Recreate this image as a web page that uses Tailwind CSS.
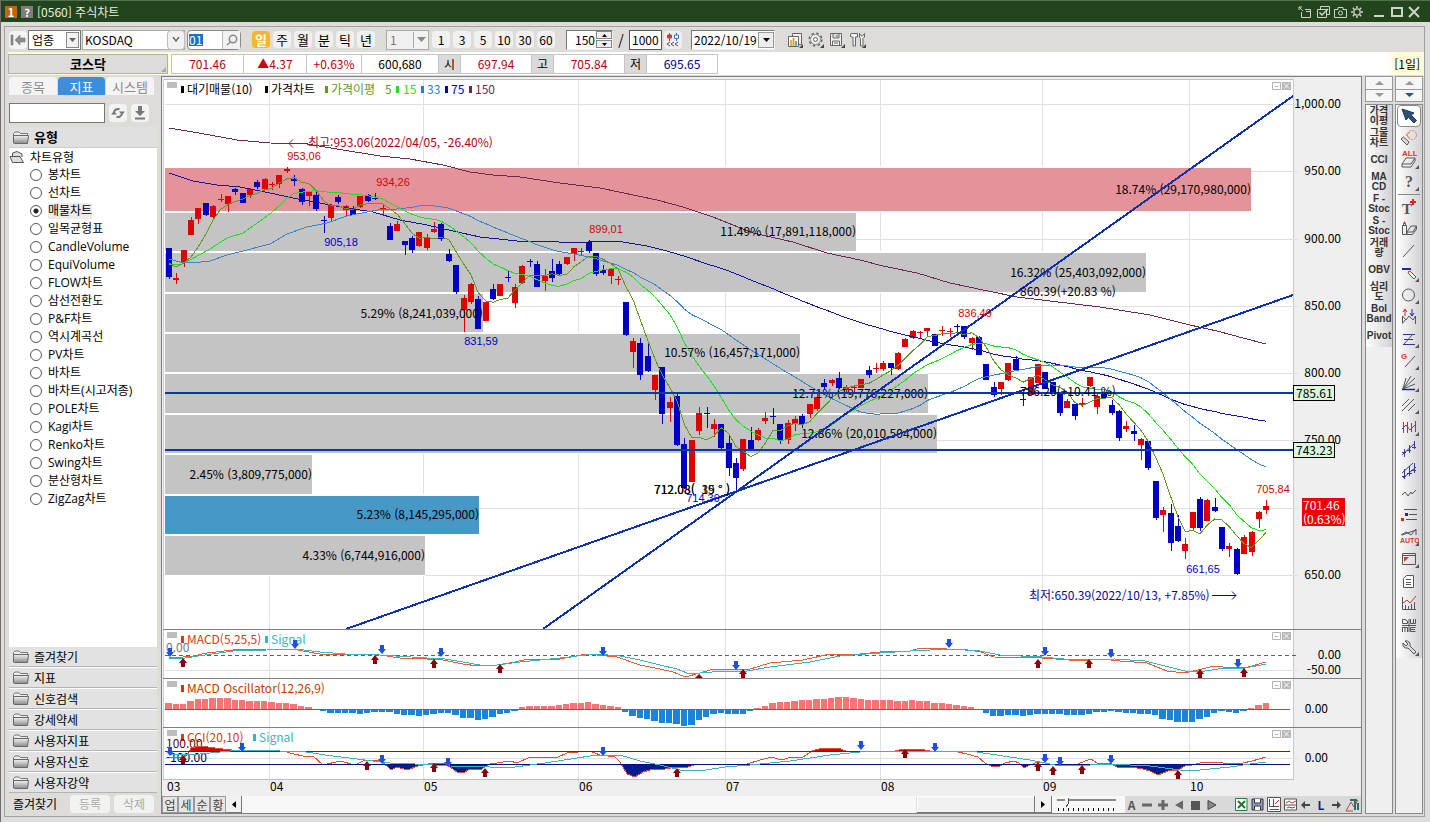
<!DOCTYPE html>
<html lang="ko">
<head>
<meta charset="utf-8">
<title>[0560] 주식차트</title>
<script src="https://cdn.jsdelivr.net/npm/@tailwindcss/browser@4"></script>
</head>
<body class="flex min-h-screen flex-col border-b border-l border-[#6c6c6c] bg-[#dddcd8] font-['Noto_Sans_CJK_KR',sans-serif] text-xs leading-4 text-black">

<header class="-ml-px flex h-[22px] items-center gap-1 border-t border-[#52704c] bg-[#23451d] pl-[5px] pr-[10px] text-[#e8eee6]">
  <span class="flex h-3 w-3 items-center justify-center bg-[#c2660c] text-[11px] font-bold leading-3 text-white">1</span>
  <span class="flex h-3 w-3 items-center justify-center bg-[#7d7d7d] text-[11px] font-bold leading-3 text-white">?</span>
  <h1 class="flex-1">[0560] 주식차트</h1>
  <div class="flex items-center gap-1">
    <button aria-label="분리"><svg width="14" height="12" fill="none" stroke="#cdd5ca"><path d="M1 4V1H4M1 1L5 5M3.500 6V11.500H12.500V3.500H7M8 5.500H12"/></svg></button>
    <button aria-label="복사"><svg width="14" height="12" fill="none" stroke="#cdd5ca"><path d="M4.500 3V.5H13.500V8.500H11M1.500 3.500H10.500V11.500H1.500Z"/><path d="M3.500 6.500L6 9L12 3" stroke-width="1.500"/></svg></button>
    <button aria-label="캡처"><svg width="13" height="12" fill="none" stroke="#cdd5ca"><path d="M.5 3.500H4V1.500H9V3.500H12.500V11.500H.5Z"/><circle cx="6.500" cy="7" r="2"/></svg></button>
    <button aria-label="설정"><svg width="13" height="12" fill="none" stroke="#cdd5ca"><circle cx="6" cy="6" r="3.200" stroke-width="1.300"/><path d="M6 0V2M6 10V12M0 6H2M10 6H12M1.800 1.800L3.200 3.200M8.800 8.800L10.200 10.200M10.200 1.800L8.800 3.200M3.200 8.800L1.800 10.200" stroke-width="1.500"/></svg></button>
    <button aria-label="최소화" class="ml-[6px]"><svg width="11" height="12"><path d="M0 10H10" stroke="#cdd5ca" stroke-width="2"/></svg></button>
    <button aria-label="최대화" class="ml-[2px]"><svg width="12" height="12"><path d="M1 2H11V10H1Z" fill="none" stroke="#cdd5ca" stroke-width="2"/></svg></button>
    <button aria-label="닫기" class="ml-px"><svg width="12" height="12"><path d="M1 1L11 11M11 1L1 11" stroke="#cdd5ca" stroke-width="2"/></svg></button>
  </div>
</header>

<div class="mr-[5px] ml-[3px] mt-1 mb-[5px] flex flex-1 flex-col border border-[#a5a0a0] pb-[2px]">

  <!-- toolbar -->
  <div class="flex h-[25px] items-center pl-1">
    <button aria-label="처음" class="flex h-[18px] w-[18px] items-center justify-center rounded-sm bg-[#f4f4f4]"><svg width="16" height="12" fill="#8c8c8c"><path d="M1 1H3V11H1ZM5 6L10 1V4H15V8H10V11Z" stroke="#777" stroke-width=".6"/></svg></button>
    <label class="relative ml-px flex"><select aria-label="구분" class="h-5 w-[53px] appearance-none border border-[#777] bg-white pl-[3px] outline-none"><option>업종</option></select><span class="pointer-events-none absolute right-[2px] top-[2px] flex h-4 w-[13px] items-center justify-center border border-[#888] bg-[#f2f2f2]"><svg width="7" height="4"><path d="M0 0H7L3.500 4Z" fill="#666"/></svg></span></label>
    <label class="relative ml-px flex"><select aria-label="종목" class="h-5 w-[103px] appearance-none border border-[#aaa] bg-white pl-[2px] outline-none"><option>KOSDAQ</option></select><span class="pointer-events-none absolute right-0 top-0 flex h-5 w-[18px] items-center justify-center rounded border border-[#bbb] bg-[#f1f1f1]"><svg width="8" height="5"><path d="M1 0L4 4L7 0" fill="none" stroke="#666" stroke-width="1.400"/></svg></span></label>
    <div class="ml-[2px] flex h-5 w-[54px] items-center rounded-sm border border-[#888] bg-white pl-px"><input aria-label="코드" value="01" class="h-3 w-[14px] bg-[#1173cf] text-white outline-none"><button aria-label="검색" class="ml-auto flex h-[18px] w-[18px] items-center justify-center border-l border-[#bbb] bg-[#f1f1f1]"><svg width="12" height="12" fill="none" stroke="#8a8a8a" stroke-width="1.500"><circle cx="7" cy="5" r="3.700"/><path d="M4.500 8L1 11"/></svg></button></div>
    <div class="ml-[11px] flex gap-[3px]" id="periods"></div>
    <label class="relative ml-[11px] flex"><select aria-label="간격" class="h-5 w-[43px] appearance-none border border-[#aaa] bg-[#f0f0f0] pl-[3px] text-[#777] outline-none"><option>1</option></select><span class="pointer-events-none absolute right-px top-[2px] flex h-4 w-[15px] items-center justify-center border-l border-[#aaa] bg-[#f2f2f2]"><svg width="9" height="5"><path d="M0 0H9L4.500 5Z" fill="#888"/></svg></span></label>
    <div class="ml-[3px] flex gap-[3px]" id="minutes"></div>
    <div class="ml-[11px] flex h-5 w-[47px] items-center border border-b-[#eee] border-l-[#777] border-r-[#eee] border-t-[#777] bg-white"><input aria-label="조회 봉수" value="150" class="w-[28px] bg-transparent text-right outline-none"><span class="ml-px flex flex-col"><button aria-label="증가" class="flex h-2 w-4 items-center justify-center border border-[#888] bg-[#eee]"><svg width="5" height="3"><path d="M0 3H5L2.500 0Z"/></svg></button><button aria-label="감소" class="mt-px flex h-2 w-4 items-center justify-center border border-[#888] bg-[#eee]"><svg width="5" height="3"><path d="M0 0H5L2.500 3Z"/></svg></button></span></div>
    <span class="w-4 text-center text-sm">/</span>
    <input aria-label="전체 봉수" value="1000" class="h-5 w-[33px] border border-[#555] bg-white pl-[2px] outline-none">
    <button aria-label="봉 이동" class="ml-[2px] flex h-[18px] w-[18px] items-center justify-center rounded-sm bg-[#efefef]"><svg width="14" height="15" fill="none"><path d="M3.500 1V9M1.500 3H5.500V6H1.500Z" fill="#dc3535" stroke="#dc3535"/><path d="M10.500 1V9" stroke="#3574c8"/><path d="M8.500 3H12.500V6.500H8.500Z" fill="#fff" stroke="#3574c8"/><path d="M4 10L1 12L4 14M8 10L5 12L8 14M12 10L9 12L12 14" stroke="#555"/></svg></button>
    <label class="relative ml-[9px] flex"><select aria-label="날짜" class="h-5 w-[84px] appearance-none border border-b-[#eee] border-l-[#777] border-r-[#eee] border-t-[#777] bg-white pl-[2px] outline-none"><option>2022/10/19</option></select><span class="pointer-events-none absolute right-px top-[2px] flex h-4 w-4 items-center justify-center border border-[#999] bg-[#eee]"><svg width="7" height="4"><path d="M0 0H7L3.500 4Z"/></svg></span></label>
    <div class="ml-3 flex gap-[5px]">
      <button aria-label="차트 종류"><svg width="16" height="16" fill="none" stroke="#666"><path fill="#eee" d="M5.500 1.500H14.500V12.500H5.500Z"/><path fill="#fff" d="M1.500 4.500H11.500V14.500H1.500Z"/><path d="M4 8V14" stroke="#eab04a" stroke-width="2"/><path d="M6.500 6V14" stroke="#e0a030" stroke-width="2"/><path d="M9 9V14" stroke="#57b6c4" stroke-width="2"/><path d="M16 12V16H12Z" fill="#444" stroke="none"/></svg></button>
      <button aria-label="환경 설정"><svg width="16" height="16" fill="none" stroke="#666"><circle cx="7.500" cy="7.500" r="6.300" stroke-width="1.500" stroke-dasharray="2.500 2.450"/><circle cx="7.500" cy="7.500" r="5" fill="#f2f2f2" stroke="#888"/><circle cx="7.500" cy="7.500" r="2"/><path d="M16 12V16H12Z" fill="#444" stroke="none"/></svg></button>
      <button aria-label="저장"><svg width="16" height="16" fill="none" stroke="#666"><path fill="#f2f2f2" d="M1.500 1.500H12.500V13.500H1.500ZM4 1.500V6H10V1.500M3.500 13V9H10.500V13M5 11H9M8 3V5"/><path d="M16 12V16H12Z" fill="#444" stroke="none"/></svg></button>
      <button aria-label="도구"><svg width="16" height="16" fill="none" stroke="#666"><path fill="#f2f2f2" d="M.5 4.500V2L2 1.500H7.500V5H5.500V14H3V5H2ZM9.500 1.500V5L10.500 6.500V14H13V6.500L14.500 5V1.500L12.500 4H11.500Z"/><path d="M16 12V16H12Z" fill="#444" stroke="none"/></svg></button>
    </div>
  </div>

  <!-- quote strip -->
  <div class="ml-[3px] flex h-[23px] items-center bg-linear-to-r from-[#fdfbd9] from-10% to-white to-20%">
    <button class="relative mr-[3px] h-5 w-[160px] border border-[#b0b0ac] bg-[#dddcd8] text-[13px] font-bold">코스닥<svg class="absolute bottom-px right-px" width="5" height="5"><path d="M5 0V5H0Z" fill="#aaa"/></svg></button>
    <dl class="flex h-5 border border-[#c4c4c4] bg-white text-center leading-[18px]">
      <dd class="w-[71px] text-[#b40010]">701.46</dd>
      <dd class="w-[63px] border-l border-[#c4c4c4] text-[#b40010]"><span class="text-[#d00010]">▲</span>4.37</dd>
      <dd class="w-[55px] border-l border-[#c4c4c4] text-[#b40010]">+0.63%</dd>
      <dd class="w-[77px] border-l border-[#c4c4c4]">600,680</dd>
      <dt class="w-[22px] border-l border-[#c4c4c4] bg-[#dadada]">시</dt>
      <dd class="w-[71px] border-l border-[#c4c4c4] text-[#b40010]">697.94</dd>
      <dt class="w-[22px] border-l border-[#c4c4c4] bg-[#dadada]">고</dt>
      <dd class="w-[71px] border-l border-[#c4c4c4] text-[#b40010]">705.84</dd>
      <dt class="w-[22px] border-l border-[#c4c4c4] bg-[#dadada]">저</dt>
      <dd class="w-[71px] border-l border-[#c4c4c4] text-[#00008c]">695.65</dd>
    </dl>
    <span class="ml-auto flex h-full items-center bg-linear-to-r from-white to-[#fffcd4] to-30% pl-2 pr-1">[1일]</span>
  </div>

  <main class="mt-px flex flex-1 items-stretch pl-1 pr-px">

    <!-- indicator sidebar -->
    <aside class="flex w-[148px] shrink-0 flex-col">
      <nav class="mt-px flex h-[18px] items-stretch gap-px text-[13px] leading-[17px] text-[#8c8c8c]">
        <button class="w-12 rounded-t bg-[#f4f4f4]">종목</button>
        <button class="w-[47px] rounded-t bg-[#3b8edb] text-white">지표</button>
        <button class="w-12 rounded-t bg-[#f4f4f4]">시스템</button>
      </nav>
      <div class="mt-2 flex h-5 items-center">
        <input aria-label="지표 검색" class="h-5 w-24 border border-[#777] bg-white outline-none">
        <button aria-label="새로고침" class="ml-1 flex h-[18px] w-[18px] items-center justify-center rounded bg-[#f3f3f3]"><svg width="14" height="14" fill="none" stroke="#777" stroke-width="2"><path d="M3 7A4 4 0 0 1 8.500 3.300M11 7A4 4 0 0 1 5.500 10.700"/><path d="M8 5.500H14L11 9ZM6 8.500H0L3 5Z" fill="#777" stroke="none"/></svg></button>
        <button aria-label="내려받기" class="ml-1 flex h-[18px] w-[18px] items-center justify-center rounded bg-[#f3f3f3]"><svg width="12" height="14" fill="#777"><path d="M4 0H8V5H11L6 10L1 5H4ZM1 11.500H11V13.500H1Z"/></svg></button>
      </div>
      <section class="mt-1 flex flex-1 flex-col bg-white">
        <h2 class="flex h-[21px] items-center gap-[5px] border-b border-[#ccc] bg-[#e0e0e0] pl-1 text-[13px] font-bold"><svg width="16" height="13"><use href="#folder"/></svg>유형</h2>
        <p class="flex h-[18px] items-center gap-[5px]"><svg width="16" height="14" fill="#ddd" stroke="#555"><path d="M3.500 7V3L8 1.500L13 4V7M1 6.500H11L14.500 12.500H3.500Z"/></svg>차트유형</p>
        <div id="types" class="flex flex-col"></div>
      </section>
      <div id="groups" class="flex flex-col"></div>
      <div class="flex h-[21px] items-center gap-1 pl-1"><span class="w-[53px]">즐겨찾기</span><button disabled class="h-[18px] w-10 rounded bg-[#f2f2f0] text-[#aaa]">등록</button><button disabled class="h-[18px] w-10 rounded bg-[#f2f2f0] text-[#aaa]">삭제</button></div>
    </aside>

    <!-- chart window -->
    <section class="ml-1 flex min-w-0 flex-1 flex-col border border-[#7e7e86] bg-[#efefef]">
      <svg id="chart" viewBox="162 77 1199 719" class="block h-auto w-full" role="img" aria-label="KOSDAQ 일봉 차트"></svg>
      <div class="flex h-[17px] items-stretch bg-[#f8f8f8]">
        <div id="marks" class="flex"></div>
        <button aria-label="왼쪽" class="flex w-4 items-center justify-center border-b border-r border-[#777] bg-[#f1f1f1]"><svg width="4" height="7"><path d="M4 0V7L0 3.500Z"/></svg></button>
        <div class="flex flex-1 justify-end"><div class="w-[118px] border-b border-r border-[#777] bg-[#f1f1f1] shadow-[inset_1px_1px_#fff,-1px_0_#ddd]"></div></div>
        <button aria-label="오른쪽" class="flex w-[17px] items-center justify-center border-b border-r border-[#777] bg-[#f1f1f1]"><svg width="4" height="7"><path d="M0 0V7L4 3.500Z"/></svg></button>
        <svg width="70" height="16" class="ml-[3px] shrink-0" fill="none" stroke="#555" shape-rendering="crispEdges"><path d="M2 4H10M13 4H61" stroke="#888" stroke-width="2"/><path d="M13 2V8L11 11"/><path d="M3 13H63" stroke="#111" stroke-width="3" stroke-dasharray="1 4"/></svg>
        <div class="flex items-center gap-[3px] bg-[#d9d9d9] pr-px">
          <button aria-label="자동" class="w-[13px] font-bold text-[#555]">A</button>
          <button aria-label="축소"><svg width="13" height="12"><path d="M1 4.500H11V7.500H1Z" fill="#666"/></svg></button>
          <button aria-label="확대"><svg width="13" height="12"><path d="M4.500 1H7.500V4.500H11V7.500H7.500V11H4.500V7.500H1V4.500H4.500Z" fill="#666"/></svg></button>
          <button aria-label="이전"><svg width="13" height="12"><path d="M10 1.500V10.500L2 6Z" fill="#666"/></svg></button>
          <button aria-label="정지"><svg width="13" height="12"><path d="M2 2H11V11H2Z" fill="#555"/></svg></button>
          <button aria-label="다음"><svg width="13" height="12"><path d="M3 1.500V10.500L11 6Z" fill="#888" stroke="#444"/></svg></button>
          <button aria-label="엑셀" class="ml-[14px]"><svg width="13" height="13"><path d="M.5 .5H12V12.500H.5Z" fill="#fff" stroke="#23803a"/><path d="M3 3L10 10M10 3L3 10" stroke="#1d7a35" stroke-width="2"/></svg></button>
          <button aria-label="저장하기"><svg width="13" height="13" fill="#8fa0b5" stroke="#334"><path d="M1 1H12V12H1Z"/><path d="M3.500 1V5H9.500V1M3.500 12V8H9.500V12" fill="#fff"/></svg></button>
          <button aria-label="십자선"><svg width="14" height="15" fill="#fff" stroke="#555"><path d="M.5 .5H13.500V14.500H.5Z"/><path d="M2.500 2V9.500H12M6.500 2V9M3 12.500H12" fill="none"/><path d="M8 7L12 3" stroke="#b33"/></svg></button>
          <button aria-label="지표 보기"><svg width="13" height="13" fill="#fff" stroke="#555"><path d="M.5 1H12.500V12H.5Z"/><path d="M2 5L5 3L8 5L12 3" fill="none" stroke="#b33"/><path d="M.5 7H12.500M3 10L5 9L8 10L11 9" fill="none"/></svg></button>
          <button aria-label="뒤로"><svg width="12" height="12"><path d="M1 6L5 2V5H10V7H5V10Z" fill="#444"/></svg></button>
          <button aria-label="로그" class="w-3 font-bold text-[#1c1c8c]">L</button>
          <button aria-label="앞으로"><svg width="12" height="12"><path d="M11 6L7 2V5H2V7H7V10Z" fill="#444"/></svg></button>
          <button aria-label="차트 도구"><svg width="15" height="14" fill="none" stroke="#555"><path d="M1 13L6 4L9 9L13 2M1 13H8" stroke="#b44"/><path d="M5 2H12M10 2V12M13 5V12" stroke="#2a6b6b" stroke-width="2"/></svg></button>
        </div>
      </div>
    </section>

    <!-- indicator shortcuts -->
    <div class="ml-[3px] flex w-7 flex-col">
      <div class="flex h-[26px] flex-col border border-[#999] bg-[#f6f6f6]"><button aria-label="위로" class="flex flex-1 items-center justify-center border-b border-[#999]"><svg width="9" height="4"><path d="M0 4H9L4.500 0Z" fill="#999"/></svg></button><button aria-label="아래로" class="flex flex-1 items-center justify-center"><svg width="9" height="4"><path d="M0 0H9L4.500 4Z" fill="#999"/></svg></button></div>
      <div class="mt-[2px] flex-1 border border-[#888] bg-[#efefef]"><div id="shortcuts" class="flex flex-col bg-linear-to-r from-white to-[#d2d2d6]"></div></div>
    </div>

    <!-- drawing tools -->
    <div class="ml-[2px] flex w-7 flex-col">
      <div class="flex h-[26px] flex-col border border-[#999] bg-[#f6f6f6]"><button aria-label="도구 위로" class="flex flex-1 items-center justify-center border-b border-[#999]"><svg width="9" height="4"><path d="M0 4H9L4.500 0Z" fill="#999"/></svg></button><button aria-label="도구 아래로" class="flex flex-1 items-center justify-center"><svg width="9" height="4"><path d="M0 0H9L4.500 4Z" fill="#2f5078"/></svg></button></div>
      <div class="mt-[2px] flex-1 border border-[#888] bg-[#efefef]"><div id="tools" class="flex flex-col items-center bg-linear-to-r from-white to-[#d2d2d6]"></div></div>
    </div>
  </main>
</div>

<svg width="0" height="0" class="absolute" aria-hidden="true"><defs>
  <linearGradient id="fg" x2="0" y2="1"><stop stop-color="#f2f2f2"/><stop offset="1" stop-color="#8a8a8a"/></linearGradient>
  <g id="folder"><path d="M.5 11.500V2.500L2 1H6L7.500 2.500H14.500V5H3Z" fill="#eee" stroke="#777"/><path d="M.5 12V4.500H15.500L14.500 12.500H1.500Z" fill="url(#fg)" stroke="#666"/></g>
</defs></svg>

<script>
const $ = id => document.getElementById(id);

$('periods').innerHTML = ['일','주','월','분','틱','년'].map((t, i) => i === 0
  ? `<button class="flex h-[17px] w-[18px] items-center justify-center rounded-sm bg-[#f7b52c] text-[13px] font-bold text-white">${t}</button>`
  : `<button class="flex h-[17px] w-[18px] items-center justify-center rounded-sm bg-[#f1f1f1] text-[13px]">${t}</button>`).join('');
$('minutes').innerHTML = ['1','3','5','10','30','60'].map(t => `<button class="flex h-[17px] w-[18px] items-center justify-center rounded-sm bg-[#f1f1f1]">${t}</button>`).join('');

$('types').innerHTML = ['봉차트','선차트','매물차트','일목균형표','CandleVolume','EquiVolume','FLOW차트','삼선전환도','P&amp;F차트','역시계곡선','PV차트','바차트','바차트(시고저종)','POLE차트','Kagi차트','Renko차트','Swing차트','분산형차트','ZigZag차트']
  .map((t, i) => `<label class="flex h-[18px] items-center gap-[6px] pl-[21px] font-['Open_Sans','Noto_Sans_CJK_KR',sans-serif]"><input type="radio" name="type" class="h-3 w-3 appearance-none rounded-full border border-[#555] bg-white checked:bg-[radial-gradient(#222_0_2px,#fff_3px)]"${i === 2 ? ' checked' : ''}><span class="px-[2px]${i === 2 ? ' bg-[#ececec]' : ''}">${t}</span></label>`).join('');

$('groups').innerHTML = ['즐겨찾기','지표','신호검색','강세약세','사용자지표','사용자신호','사용자강약']
  .map(t => `<button class="flex h-[21px] items-center gap-[5px] border-b border-t border-b-[#b4b4b4] border-t-white bg-[#e2e2e2] pl-1 text-left"><svg width="16" height="13"><use href="#folder"/></svg>${t}</button>`).join('');

$('marks').innerHTML = ['업','세','순','황'].map(t => `<button class="w-4 border border-[#999] bg-[#e6e6e6] leading-[14px] text-[#444]">${t}</button>`).join('');

$('shortcuts').innerHTML = ['가격<br>이평','그물<br>차트','CCI','MA<br>CD','F -<br>Stoc','S -<br>Stoc','거래<br>량','OBV','심리<br>도','Bol<br>Band','Pivot']
  .map(t => `<button class="h-[22px] font-['Liberation_Sans','Noto_Sans_CJK_KR',sans-serif] text-[10px] font-bold leading-[10px] text-[#333]">${t}</button>`).join('');

const corner = '<path d="M20 15V19H16Z" fill="#555" stroke="none"/>';
const tools = [
  ['선택','<path d="M3 3L7 14L9.500 11.500L15 17L17.500 14.500L12 9L15 7Z" fill="#2c5277" stroke="#1c3a58"/>'],
  ['되돌리기','<circle cx="13" cy="7" r="4.500" stroke="#e08050" stroke-dasharray="2 1"/><path d="M11 4L7 7L11 10" stroke="#e08050"/><path d="M2 11L4.500 9L10 14L8 17Z" fill="#ddd"/>'],
  ['전체 지우기','<text x="3" y="6" font-size="8" font-weight="bold" fill="#d43a20" stroke="none" font-family="Liberation Sans">ALL</text><path d="M3 14L7 8H16L12 14ZM3 14V17H12L16 11V8" fill="#f2f2f2"/>' + corner],
  ['도움말','<text x="6" y="15" font-size="16" font-weight="bold" fill="#555" stroke="none" font-family="Liberation Serif">?</text>' + corner],
  ['문자','<text x="3" y="17" font-size="15" font-weight="bold" fill="#555" stroke="none" font-family="Liberation Serif">T</text><path d="M14 2V8M11 5H17" stroke="#e02020" stroke-width="2"/>'],
  ['채우기','<path d="M3.500 6.500H7.500V15.500H3.500ZM4.500 6V4.500H6.500V6M8 13L12 7H17.500L14 13ZM8 13V15.500H13.500L17.500 10V7"/><path d="M5 3L6 4" stroke="#d43a20" stroke-width="2"/>'],
  ['추세선','<path d="M4 16L15 4"/>'],
  ['펜','<path d="M3 6H12" stroke="#2222c0" stroke-width="2"/><path d="M9 9L11 8L17 14L15 16L10 11Z" fill="#efe" stroke="#b34"/>' + corner],
  ['원','<circle cx="9.500" cy="10" r="6"/>' + corner],
  ['구간','<path d="M3.500 16V9L7 13L10 9L14 13L16.500 9V17M3.500 16.500L7 12"/><path d="M6 9V2M4 5L6 2L8 5" stroke="#e02020"/><path d="M13 2V9M11 6L13 9L15 6" stroke="#2222c0"/>'],
  ['평행선','<path d="M4 5.500H16M4 15.500H16M5 10.500H14" stroke="#333396"/><path d="M14 5L5 15"/>' + corner],
  ['황금분할','<text x="2" y="8" font-size="8" font-weight="bold" fill="#d43a20" stroke="none" font-family="Liberation Sans">G</text><path d="M6 16L16 5"/>' + corner],
  ['팬','<path d="M4 16L7 5M4 16L12 3M4 16L16 5M4 16L16 11"/><path d="M3 16.500H16" stroke="#2222c0" stroke-width="1.500"/>' + corner],
  ['삼선','<path d="M3 11L10 4M3 16L15 4M9 16L16 9"/>' + corner],
  ['주기선','<path d="M4.500 5V16M8.500 5V16M12.500 6V15M16.500 4V15" stroke="#994030"/><path d="M3 12L7 8L11 13L17 7" stroke="#994030"/>' + corner],
  ['회귀선','<path d="M3 16L16 4M5.500 10V18M10.500 6V14M15.500 2V10M3 13.500H7M8 11.500H12M13 8.500H17" stroke="#3a3a94"/>'],
  ['회귀채널','<path d="M3 12L14 2M4 17L17 6M5.500 8V18M10.500 5V15M15.500 2V12M3 15.500H7M8 12.500H13M12 9.500H17" stroke="#3a3a94"/>'],
  ['파동','<path d="M3 12L6 9L9 13L12 9L13 11L17 7"/>'],
  ['수평선','<path d="M5 4.500H18M10 9.500H18M7 14.500H18"/><path d="M2 13H5V16H2Z" fill="#e02020" stroke="none"/><path d="M6 8H9V11H6Z" fill="#2222c0" stroke="none"/>'],
  ['자동추세','<path d="M2 8L7 5L12 8L17 2V8M3 8L17 3"/><text x="1" y="16" font-size="7" font-weight="bold" fill="#d43a20" stroke="none" font-family="Liberation Sans">AUTO</text>' + corner],
  ['창','<path d="M3.500 4.500H16.500V15.500H3.500ZM3 6.500H17"/><path d="M5 8H10L5 13Z" fill="#d43a20" stroke="none"/>' + corner],
  ['문서','<path d="M7.500 4.500H14.500V16.500H4.500V7.500ZM7 8.500H12M7 11.500H12M7 13.500H12" fill="#fff"/>'],
  ['통계','<path d="M3.500 4V16.500H17M6.500 12V17M9.500 13V17M12.500 11V17M15.500 9V17"/><path d="M4 10L8 7L11 10L17 3" stroke="#c33"/>'],
  ['배치','<path d="M3.500 4.500H6L8.500 6V8.500H3.500ZM11.500 4V8.500H16.500V4M14.500 4V8M3.500 12V17M3.500 12.500H8.500V17M6 13V17M16.500 12.500H11.500V16.500H16.500M11.500 14.500H16M3 10.500H17M10 4V17"/>'],
  ['설정 도구','<path d="M4 6L7 9L9 7L6 4A4 4 0 0 1 11 9L17 15L15 17L9 11A4 4 0 0 1 4 6Z" fill="#ddd"/>' + corner],
];
$('tools').innerHTML = tools.map(([name, p], i) =>
  `<button aria-label="${name}" class="${i === 0 ? 'flex h-[22px] w-6 items-center justify-center rounded-sm border border-[#8a8a8a] bg-white' : 'flex h-[22px] w-6 items-center justify-center'}"><svg width="20" height="20" class="shrink-0" fill="none" stroke="#555">${p}</svg></button>` +
  (i === 3 ? '<hr class="my-px w-[22px] border-[#888]">' : '')).join('');

/* ---------- chart ---------- */
const X0 = 169, STEP = 7.364, cx = i => X0 + STEP * i;
const out = [];
const add = s => out.push(s);
const line = (x1, y1, x2, y2, c, w = 1, extra = '') => add(`<line x1="${x1}" y1="${y1}" x2="${x2}" y2="${y2}" stroke="${c}" stroke-width="${w}" shape-rendering="crispEdges" ${extra}/>`);
const rect = (x, y, w, h, c, extra = '') => add(`<rect x="${x}" y="${y}" width="${w}" height="${h}" fill="${c}" shape-rendering="crispEdges" ${extra}/>`);
const text = (x, y, t, c = '#000', a = 'start', cls = '') => add(`<text x="${x}" y="${y}" fill="${c}" text-anchor="${a}" class="whitespace-pre ${cls}">${t}</text>`);
const poly = (pts, c) => add(`<polyline points="${pts.map(p => p.join()).join(' ')}" fill="none" stroke="${c}" shape-rendering="crispEdges"/>`);

rect(162, 77, 1199, 719, '#efefef');
rect(163, 79, 1131, 701, '#fff');
line(163, 79.5, 1294, 79.5, '#c0c0c0');
line(1293.5, 79, 1293.5, 780, '#c8c8c8');
line(163.5, 79, 163.5, 780, '#d0d0d0');
[104,171,239,306,373,440,508,575].forEach(y => line(165, y + .5, 1298, y + .5, '#e0e0e0'));
[269,423,578,725,880,1042,1189].forEach(x => line(x + .5, 80, x + .5, 783, '#e0e0e0'));
[670,758].forEach(y => line(165, y + .5, 1298, y + .5, '#e0e0e0'));

/* volume by price: top, height, right edge, label */
const profile = [
  [168,43,1251,'18.74% (29,170,980,000)','#e5939a'],
  [213,38,856,'11.49% (17,891,118,000)'],
  [253,39,1146,'16.32% (25,403,092,000)'],
  [294,39,483,'5.29% (8,241,039,000)'],
  [334,38,800,'10.57% (16,457,171,000)'],
  [374,39,928,'12.71% (19,776,227,000)'],
  [415,38,937,'12.86% (20,010,504,000)'],
  [455,39,312,'2.45% (3,809,775,000)'],
  [496,38,479,'5.23% (8,145,295,000)','#4698c7'],
  [536,39,425,'4.33% (6,744,916,000)'],
];
profile.forEach(([y, h, r, , c]) => { rect(165, y - 2, r - 165, h + 3, '#fff'); rect(165, y, r - 165, h, c || '#c4c4c4'); });

/* candles: colour, body top, body bottom, wick top, wick bottom; thirds of a pixel below the base */
const sets = [
  [90, `B474 560 474 567,R563 569 550 583,R480 516 480 530,R390 434 380 434,R354 386 354 402,B339 374 339 378,R348 380 345 387,R326 329 313 338,R318 342 318 366,B297 307 293 314,B309 338 309 340,R297 314 294 324,B276 290 269 297,R267 298 264 298,R283 286 275 299,R256 284 254 293,R236 241 230 248,B267 272 254 287,B297 335 294 345,R306 319 304 348,B316 358 307 363,B390 393 378 428,R345 383 342 392,B320 335 316 342,R348 360 345 381,B360 374 349 374,R318 352 318 355,B315 332 312 335,B325 329 309 330,R354 357 343 380,B408 449 399 449,R402 422 393 422,B453 465 453 494,B444 480 438 490,R426 468 426 471,R440 474 431 480,R418 428 396 430,B402 448 398 453,B492 513 478 516,B525 606 525 612,R624 659 614 725,R582 635 578 640,B626 716 618 716,R635 692 635 692,B597 627 583 630,R583 620 583 620`],
  [200, `B230 233 213 245,R261 308 252 323,R198 250 194 252,B183 186 178 203,B192 260 184 260,R228 242 207 272,B213 234 177 245,B192 223 183 226,R171 191 171 195,R144 163 144 182,R153 157 143 165,B126 152 120 160,B160 223 160 228,B209 219 196 225,R207 228 203 252,R238 241 228 256,B306 404 306 408,R423 456 414 503,B429 524 414 540,B468 512 430 518,R525 570 525 600,B502 643 502 672,R606 624 592 666,B588 734 582 738,B732 864 714 868,R720 845 720 845,R639 692 621 704,B640 643 621 684,R672 686 656 710,B672 743 672 750,B730 806 708 828,B789 833 774 870,R717 806 717 812,B720 748 682 750,R690 719 684 723,R654 662 635 670,B649 653 625 672,B672 719 672 731,R669 719 660 732,R657 672 648 692,B648 671 643 684,R612 641 612 653,R591 626 580 635,B549 562 538 567,R541 551 536 558,B534 564 517 568,R562 572 555 578,R562 566 555 575`],
  [260, `R358 384 358 384,B331 347 318 355,R325 329 309 338,R309 326 304 335,B309 323 309 345,R279 326 276 330,R237 260 234 260,R213 234 210 236,R216 219 213 235,R205 215 205 228,B223 260 223 260,R211 214 198 228,R214 217 204 232,B199 202 192 220,B198 230 198 238,R234 250 230 268,B231 284 228 284,B312 359 312 359,B381 406 366 412,R366 388 366 405,R310 361 310 365,B297 329 289 334,B418 421 400 440,R351 406 351 406,R313 370 313 370,B337 388 337 388,B367 400 367 400,B402 458 398 466,R424 446 418 446,B433 470 433 482,R430 436 414 440,R351 377 351 380,R408 440 400 462,B398 414 398 414,B436 460 420 466,B454 536 450 542,R498 508 483 516,B514 524 495 542,R538 557 534 600,B544 626 544 632,B664 776 664 782,R751 767 742 818,B760 851 732 872,B798 844 765 846,R852 872 835 899,R757 806 757 812,B717 803 711 812,R720 782 717 784,B741 752 714 755,B802 869 802 875,R858 868 850 893,B867 941 864 945,R832 884 826 884,R816 875 814 888,R756 776 752 803,R739 751 720 762`],
];
const closes = [];
let n = 0;
for (const [base, rows] of sets) for (const row of rows.split(',')) {
  const up = row[0] === 'R', [t, b, h, l] = row.slice(1).split(' ').map(v => base + v / 3);
  const x = Math.round(cx(n++)), c = up ? '#e00000' : '#0000c4';
  rect(x, Math.round(h), 1, Math.max(1, Math.round(l - h)), c);
  rect(x - 3, Math.round(t), 6, Math.max(1, Math.round(b - t)), c);
  closes.push(up ? t : b);
}
const average = (len, lead, c) => {
  const pts = [...lead];
  for (let i = len - 1; i < closes.length; i++) pts.push([cx(i), closes.slice(i - len + 1, i + 1).reduce((a, v) => a + v) / len]);
  poly(pts, c);
};
poly([[169,128],[193,132],[210,135],[237,140],[270,143],[307,144],[343,150],[380,156],[410,159],[443,165],[470,172],[493,175],[520,177],[560,183],[600,188],[657,200],[683,207],[713,217],[753,233],[793,242],[827,253],[860,260],[883,266],[917,273],[950,283],[983,290],[1017,297],[1050,301],[1100,307],[1150,315],[1190,325],[1217,331],[1243,338],[1266,344]], '#6e2a4e');
average(75, [[169,173],[193,181],[217,185],[240,187],[270,193],[293,198],[320,203],[347,208],[373,212],[400,220],[427,225],[453,231],[480,237],[517,241],[540,241],[577,243],[600,241],[623,242],[647,246],[667,251],[687,257],[707,264]], '#1414a0');
average(33, [[169,259],[180,262],[193,263],[210,261],[227,255],[243,251],[270,244],[287,234],[307,227],[327,223],[347,216],[367,212],[383,209],[397,209]], '#3a86c8');
average(15, [[169,264],[180,265],[190,260],[210,249],[227,238],[243,233],[260,221]], '#22dd22');
average(5, [[169,263],[176,267],[184,263],[191,257]], '#5f9a1e');

profile.forEach(([y, h, r, t]) => text(r, y + Math.round(h / 2) + 4, t, '#000', 'end'));
line(165, 393, 1293, 393, '#0a36b0', 2);
line(165, 450, 1293, 450, '#0a36b0', 2);
line(346, 629, 1293, 295, '#0a30b4', 2);
line(543, 629, 1293, 96, '#0a30b4', 2);

text(654, 494, '712.08(  35 ° )');
text(654, 494, '712.08(  19 ° )');
text(1020, 296, '860.39(+20.83 %)');
text(1020, 396, '786.20(+10.41 %)');
text(308, 147, '최고:953.06(2022/04/05, -26.40%)', '#b40018');
add('<path d="M308 143.500H289M293 139.500L289 143.500L293 147.500" fill="none" stroke="#c00018"/>');
text(1029, 600, '최저:650.39(2022/10/13, +7.85%)', '#0a0a90');
add('<path d="M1212 595.500H1236M1232 591.500L1236 595.500L1232 599.500" fill="none" stroke="#0a0a90"/>');
[[304,160,'953,06',1],[393,186,'934,26',1],[341,246,'905,18'],[606,233,'899,01',1],[481,345,'831,59'],[975,317,'836,49',1],[703,502,'714,39'],[1203,573,'661,65'],[1273,493,'705,84',1]]
  .forEach(([x, y, t, up]) => text(x, y, t, up ? '#d80000' : '#0000c4', 'middle', "font-['Liberation_Sans'] text-[11px]"));

/* legends */
const key = (x, y, c) => rect(x, y, 3, 7, c);
rect(167, 82, 10, 6, '#bdbdbd');
[[181,'대기매물(10)','#000'],[265,'가격차트','#000'],[325,'가격이평','#5f9a1e'],[396,'15','#22dd22',403],[421,'33','#2a7ccc',427],[445,'75','#0000b4',451],[469,'150','#6e2a4e',475]]
  .forEach(([x, t, c, tx]) => { key(x, 86, c); text(tx || x + 6, 94, t, c); });
text(385, 94, '5', '#5f9a1e');
const ctl = y => {
  add(`<path d="M1272.500 ${y + .5}H1280.500V${y + 7.5}H1272.500ZM1275 ${y + 4.5}H1278" fill="#fff" stroke="#b4b4b4"/>`);
  rect(1282, y, 9, 8, '#b8b8b8');
  add(`<path d="M1284 ${y + 1.5}L1289 ${y + 6.5}M1289 ${y + 1.5}L1284 ${y + 6.5}" stroke="#fff"/>`);
};
[82, 632, 681, 730].forEach(ctl);

/* price axis */
[[108,'1,000.00'],[175,'950.00'],[243,'900.00'],[310,'850.00'],[377,'800.00'],[444,'750.00'],[579,'650.00'],[659,'0.00'],[674,'-50.00']].forEach(([y, t]) => text(1341, y, t, '#000', 'end'));
text(1328, 713, '0.00', '#000', 'end');
text(1328, 762, '0.00', '#000', 'end');
[[385,'785.61'],[442,'743.23']].forEach(([y, t]) => { rect(1293.5, y + .5, 41, 15, '#dcf8dc', 'stroke="#000"'); text(1296, y + 13, t); });
rect(1302, 498, 43, 28, '#f00000');
text(1303, 510, '701.46', '#fff');
text(1303, 524, '(0.63%)', '#fff');
[629, 678, 727].forEach(y => line(163, y + .5, 1361, y + .5, '#808080'));
line(163, 779.5, 1294, 779.5, '#c0c0c0');
[[167,'03'],[270,'04'],[424,'05'],[579,'06'],[726,'07'],[881,'08'],[1043,'09'],[1190,'10']].forEach(([x, t]) => text(x, 791, t));

/* MACD */
const arrow = (x, y, up) => add(up
  ? `<path d="M${x} ${y - 5}L${x + 4} ${y}H${x + 2}V${y + 4}H${x - 2}V${y}H${x - 4}Z" fill="#8c0008"/>`
  : `<path d="M${x} ${y + 5}L${x + 4} ${y}H${x + 2}V${y - 4}H${x - 2}V${y}H${x - 4}Z" fill="#1c50e0"/>`);
rect(167, 632, 10, 6, '#bdbdbd');
text(166, 652, '0.00', '#777');
key(181, 636, '#d04010'); text(187, 644, 'MACD(5,25,5)', '#d04010');
key(265, 636, '#3cb4c0'); text(271, 644, 'Signal', '#3cb4c0');
line(165, 655.5, 1298, 655.5, '#606060', 1, 'stroke-dasharray="4 3"');
poly([[169,657],[183,657],[193,656],[207,653],[233,650],[267,649],[293,649],[303,651],[320,654],[347,654],[380,655],[400,658],[427,659],[443,660],[463,664],[478,666],[497,665],[515,662],[528,659],[560,659],[587,654],[617,657],[640,665],[660,669],[673,672],[685,677],[700,673],[710,670],[725,669],[747,670],[770,663],[803,660],[830,654],[860,654],[880,652],[910,651],[920,648],[947,649],[968,650],[981,652],[994,657],[1042,658],[1069,660],[1089,660],[1101,659],[1120,661],[1147,663],[1167,671],[1184,673],[1198,670],[1214,666],[1231,668],[1248,667],[1266,662]], '#e06038');
poly([[169,658],[185,658],[205,655],[233,651],[267,650],[296,649],[320,652],[345,654],[380,655],[427,658],[445,659],[463,662],[480,665],[497,665],[520,662],[560,658],[595,654],[620,656],[640,660],[660,665],[677,669],[687,673],[700,673],[725,671],[747,671],[770,667],[810,662],[840,656],[880,653],[910,651],[950,649],[980,651],[1000,655],[1042,657],[1075,660],[1115,659],[1145,661],[1165,666],[1185,671],[1205,671],[1225,668],[1245,668],[1266,664]], '#3cb4c0');
[[170,652],[295,644],[382,649],[441,652],[603,651],[736,665],[949,643],[1045,651],[1111,653],[1238,663]].forEach(([x, y]) => arrow(x, y));
[[183,663],[375,660],[434,664],[500,669],[743,674],[1038,664],[1089,664],[1200,674],[1244,673]].forEach(([x, y]) => arrow(x, y, 1));
add('<path d="M699 674L703 678H695Z" fill="#8c0008"/>');

/* MACD oscillator */
rect(167, 681, 10, 6, '#bdbdbd');
key(181, 685, '#c83a00'); text(187, 693, 'MACD Oscillator(12,26,9)', '#c83a00');
const osc = [6,5,5,8,10,10,11,11,11,9, 9,8,8,8,7,6,6,5,3,2, 0,-1,-3,-3,-3,-3,-4,-3,-2,-2, -2,-4,-5,-5,-6,-5,-4,-3,-3,-5, -8,-8,-10,-9,-7,-4,-3,-1,2,3, 3,3,3,4,5,6,6,7,5,4, 3,2,-2,-6,-8,-9,-11,-13,-13,-14, -16,-15,-10,-7,-4,-3,-4,-4,-4,-1, 1,3,6,7,7,8,9,9,10,10, 11,12,12,11,10,9,9,9,9,8, 8,9,8,8,6,6,5,4,3,2, 0,-3,-6,-6,-5,-5,-6,-5,-4,-4, -4,-4,-5,-5,-5,-4,-2,-2,-1,-2, -3,-3,-4,-4,-5,-9,-10,-12,-12,-12, -9,-7,-3,-1,-2,-3,-1,1,4,6];
line(165, 709.5, 1290, 709.5, '#b04848');
osc.forEach((v, i) => {
  const a = Math.round(cx(i) - 3.7), w = Math.round(cx(i + 1) - 3.7) - a - 1;
  if (v > 0) rect(a, 709 - v, w, v, '#fa7474');
  if (v < 0) rect(a, 710, w, -v, '#1c84d8');
});

/* CCI */
rect(167, 730, 10, 6, '#bdbdbd');
key(181, 734, '#d04010'); text(187, 742, 'CCI(20,10)', '#d04010');
key(253, 734, '#3cb4c0'); text(259, 742, 'Signal', '#3cb4c0');
text(166, 748, '100.00', '#700010');
text(166, 762, '-100.00', '#000050');
const cci = [[169,757],[183,757],[187,755],[191,748],[200,746],[215,748],[240,751],[283,751],[294,754],[303,756],[313,756],[323,765],[340,761],[355,765],[365,760],[378,760],[382,762],[388,767],[391,770],[397,767],[407,770],[418,766],[428,764],[433,763],[443,763],[450,767],[457,772],[463,773],[470,769],[480,770],[490,764],[510,761],[517,763],[530,757],[545,758],[558,757],[567,753],[590,751],[600,755],[615,757],[620,762],[627,774],[635,777],[643,772],[650,770],[665,769],[677,767],[685,768],[697,764],[725,765],[747,764],[760,760],[772,757],[781,760],[792,757],[803,757],[812,751],[822,748],[838,748],[846,751],[880,751],[895,751],[903,749],[920,749],[930,751],[958,752],[967,754],[978,757],[985,763],[993,767],[1000,766],[1005,763],[1014,761],[1019,763],[1024,768],[1030,765],[1038,762],[1045,763],[1055,765],[1078,764],[1085,761],[1091,759],[1097,763],[1110,763],[1119,768],[1130,767],[1143,769],[1150,771],[1158,775],[1168,771],[1178,770],[1185,766],[1192,765],[1200,763],[1215,762],[1230,764],[1243,763],[1252,761],[1266,757]];
add('<defs><clipPath id="over"><rect x="165" y="740" width="1130" height="11.5"/></clipPath><clipPath id="under"><rect x="165" y="765" width="1130" height="14"/></clipPath></defs>');
const area = (y, c, clip) => add(`<polygon points="169,${y} ${cci.map(p => p.join()).join(' ')} 1266,${y}" fill="${c}" clip-path="url(#${clip})"/>`);
area(752, '#d40000', 'over');
area(764, '#001a90', 'under');
poly(cci, '#e05030');
line(165, 751.5, 1290, 751.5, '#a00818');
line(165, 764.5, 1290, 764.5, '#001080');
poly([[169,754],[185,755],[200,754],[240,750],[280,751],[300,751],[325,755],[365,760],[390,763],[415,764],[450,766],[490,767],[515,767],[545,763],[590,756],[600,755],[620,755],[640,761],[660,765],[680,770],[700,771],[725,767],[750,765],[790,761],[830,755],[870,751],[920,751],[970,751],[990,754],[1010,757],[1030,760],[1055,765],[1090,765],[1110,764],[1150,766],[1180,770],[1200,770],[1230,767],[1250,764],[1266,762]], '#3cb4c0');
[[170,751],[242,747],[382,759],[448,762],[603,751],[861,745],[935,747],[1045,758],[1060,761],[1111,759]].forEach(([x, y]) => arrow(x, y));
[[183,760],[367,766],[434,768],[485,773],[677,773],[905,754],[1038,767],[1053,771],[1082,770],[1178,775]].forEach(([x, y]) => arrow(x, y, 1));

$('chart').innerHTML = out.join('');
</script>
</body>
</html>
